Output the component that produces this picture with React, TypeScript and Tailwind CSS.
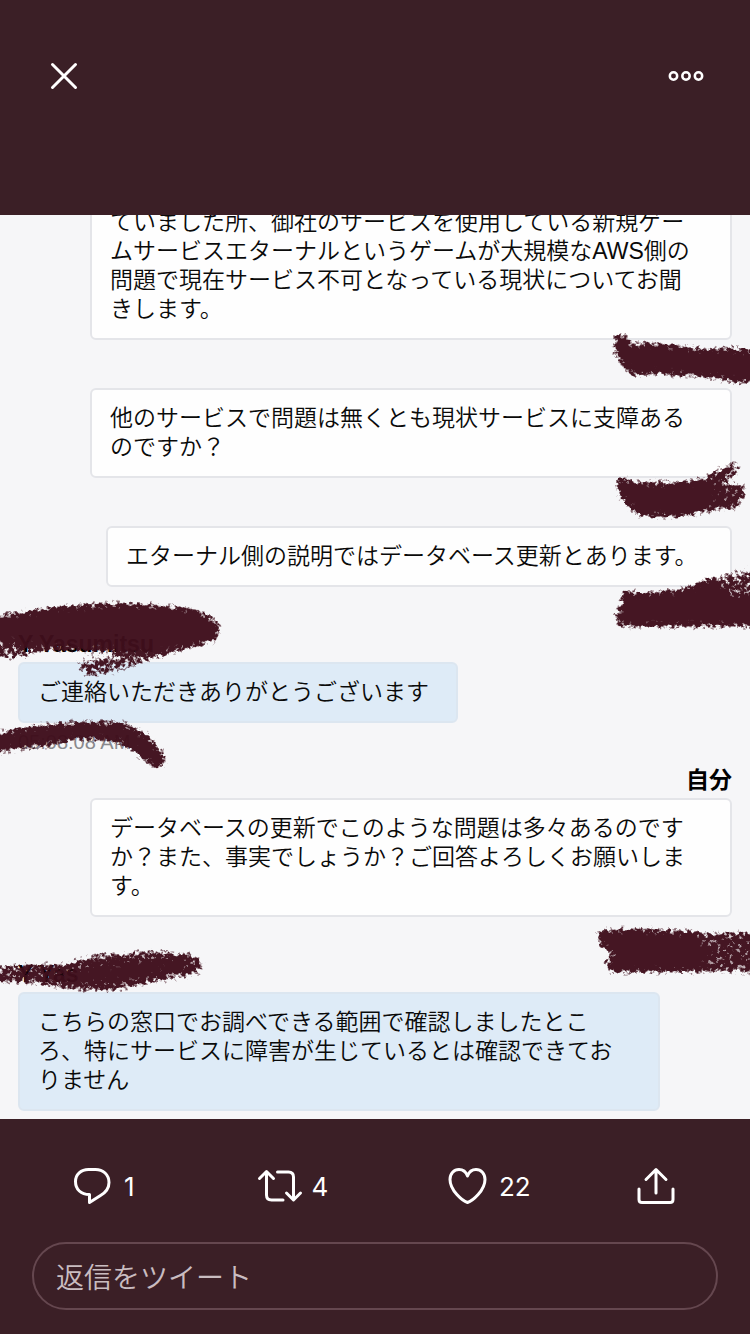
import React from "react";
import clsx from "clsx";

type Message = {
  from: "me" | "agent";
  width: string;
  text: string;
  name?: string;
  time?: string;
};

const messages: Message[] = [
  {
    from: "me",
    width: "w-[642px] -mt-[23px]",
    text: "ていました所、御社のサービスを使用している新規ゲー\nムサービスエターナルというゲームが大規模なAWS側の\n問題で現在サービス不可となっている現状についてお聞\nきします。",
  },
  {
    from: "me",
    width: "w-[642px]",
    text: "他のサービスで問題は無くとも現状サービスに支障ある\nのですか？",
  },
  {
    from: "me",
    width: "w-[626px]",
    text: "エターナル側の説明ではデータベース更新とあります。",
  },
  {
    from: "agent",
    width: "w-[440px]",
    name: "Y Yasumitsu",
    time: "05:08:08 AM",
    text: "ご連絡いただきありがとうございます",
  },
  {
    from: "me",
    width: "w-[642px]",
    name: "自分",
    text: "データベースの更新でこのような問題は多々あるのです\nか？また、事実でしょうか？ご回答よろしくお願いしま\nす。",
  },
  {
    from: "agent",
    width: "w-[642px]",
    name: "Y Yas",
    text: "こちらの窓口でお調べできる範囲で確認しましたとこ\nろ、特にサービスに障害が生じているとは確認できてお\nりません",
  },
];

const Bubble: React.FC<{ message: Message; last: boolean }> = ({ message, last }) => {
  const mine = message.from === "me";
  return (
    <div className={clsx("flex flex-col", mine ? "items-end" : "items-start")}>
      {message.name && (
        <p className="h-[27px] text-[23px] font-bold leading-[18px] text-black">{message.name}</p>
      )}
      <p
        className={clsx(
          "max-w-full whitespace-pre-line rounded-md border-2 px-[18px] py-[14px] text-[23px] font-[350] leading-[29px] text-[#0a0a0a]",
          mine ? "border-[#e4e5e9] bg-[#fefefe]" : "border-[#dce6f0] bg-[#deebf7]",
          message.width
        )}
      >
        {message.text}
      </p>
      {!last && (
        <p className="h-12 pt-[9px] text-xl leading-5 text-[#8a8a8e]">{message.time}</p>
      )}
    </div>
  );
};

// Crayon strokes over the names and times
const Scribbles: React.FC = () => (
  <svg
    className="pointer-events-none absolute inset-0 h-full w-full"
    viewBox="0 0 750 904"
    preserveAspectRatio="none"
    aria-hidden="true"
  >
    <defs>
      <filter
        id="crayon"
        filterUnits="userSpaceOnUse"
        x="-20"
        y="0"
        width="790"
        height="904"
        colorInterpolationFilters="sRGB"
      >
        <feGaussianBlur in="SourceAlpha" stdDeviation="3" result="soft" />
        <feTurbulence type="fractalNoise" baseFrequency="0.24" numOctaves="3" seed="7" />
        <feColorMatrix values="0 0 0 0 0  0 0 0 0 0  0 0 0 0 0  2.2 0 0 0 -0.6" result="grain" />
        <feComposite in="soft" in2="grain" operator="arithmetic" k2="0.85" k3="0.5" />
        <feComponentTransfer result="mask">
          <feFuncA type="linear" slope="4" intercept="-2.4" />
        </feComponentTransfer>
        <feFlood floodColor="#3f0f1c" />
        <feComposite in2="mask" operator="in" />
      </filter>
    </defs>
    <g filter="url(#crayon)" fill="#000" opacity="0.97">
      <path d="M615 119 L626 118 L630 129 L652 127 L680 131 L710 134 L726 132 L770 137 L770 158 L742 169 L715 164 L690 162 L660 159 L632 161 L620 149 L614 137Z" />
      <path d="M615 264 L624 262 L632 267 L675 267 L704 263 L714 270 L720 282 L700 298 L682 302 L641 302 L626 291 L617 276Z" />
      <path d="M700 264 L734 246 L741 257 L722 268 L745 270 L746 284 L735 294 L700 298Z" opacity="0.84" />
      <path d="M620 376 L650 377 L682 374 L712 362 L730 380 L770 384 L770 412 L620 412 L614 399 L622 390Z" />
      <path d="M706 364 L770 348 L770 398 L718 396Z" opacity="0.7" />
      <path d="M-20 402 L20 397 L60 391 L110 388 L150 389 L197 394 L219 407 L219 425 L190 433 L155 440 L110 436 L50 435 L-20 422Z" />
      <path d="M-20 422 L20 424 L55 432 L30 442 L-20 447Z" opacity="0.68" />
      <path d="M78 445 L110 440 L175 426 L180 435 L125 455 L88 464 L78 455Z" opacity="0.68" />
      <path d="M-20 523 L0 517 L30 511 L80 506 L122 507 L147 519 L167 542 L162 553 L152 552 L132 535 L115 527 L78 524 L50 531 L20 534 L-20 541Z" />
      <path d="M597 715 L635 713 L700 717 L708 758 L690 757 L610 758 L604 746 L615 740 L599 730Z" />
      <path d="M690 718 L770 716 L770 760 L735 757 L700 757Z" opacity="0.82" />
      <path d="M-20 754 L35 748 L60 749 L95 739 L125 738 L150 735 L190 738 L204 748 L200 759 L145 770 L110 777 L70 775 L30 769 L-20 767Z" opacity="0.8" />
      <path d="M60 758 L120 748 L185 744 L190 752 L130 766 L80 768Z" />
    </g>
  </svg>
);

const iconClass = "h-12 w-12 shrink-0 fill-none stroke-white stroke-3";

const ReplyIcon = () => (
  <svg className={iconClass} viewBox="0 0 48 48" strokeLinejoin="round">
    <path d="M21.5 32.5V40.5L32.5 33.5C38.5 30 41 25.5 41 20.5C41 12.5 35 7.5 27.5 7.5H20.5C13 7.5 7.5 12.5 7.5 19.5C7.5 27.5 13 32.5 21.5 32.5Z" />
  </svg>
);

const RetweetIcon = () => (
  <svg className={iconClass} viewBox="0 0 48 48" strokeLinecap="round" strokeLinejoin="round">
    <path d="M3.5 16.5L10.5 9.5L17.5 16.5M10.5 10V33C10.5 36.5 12.5 38 15.5 38H27" />
    <path d="M44.5 31L37.5 38L30.5 31M37.5 37.5V15C37.5 11.5 35.5 10 32.5 10H21.5" />
  </svg>
);

const HeartIcon = () => (
  <svg className={iconClass} viewBox="0 0 48 48" strokeLinejoin="round">
    <path d="M24.5 40.5C19.5 39 7 28.5 7 17.5C7 11.5 11 7.5 16 7.5C20 7.5 23 10 24.5 14C26 10 29 7.5 33 7.5C38 7.5 42 11.5 42 17.5C42 28.5 29.5 39 24.5 40.5Z" />
  </svg>
);

const ShareIcon = () => (
  <svg className={iconClass} viewBox="0 0 48 48" strokeLinecap="round" strokeLinejoin="round">
    <path d="M15 17.5L25 7.5L35 17.5M25 8V31" />
    <path d="M8 27V37.5C8 39.5 9 40.5 11 40.5H39C41 40.5 42 39.5 42 37.5V27" />
  </svg>
);

const actions = [
  { label: "返信", icon: <ReplyIcon />, count: "1" },
  { label: "リツイート", icon: <RetweetIcon />, count: "4" },
  { label: "いいね", icon: <HeartIcon />, count: "22" },
  { label: "共有", icon: <ShareIcon />, count: "" },
];

const App: React.FC = () => {
  return (
    <div className="flex min-h-screen flex-col bg-[#3b1f26] font-['Liberation_Sans','Noto_Sans_CJK_JP',sans-serif]">
      <header className="flex justify-between px-10 pt-[52px] pb-[115px]">
        <button type="button" aria-label="閉じる">
          <svg className={iconClass} viewBox="0 0 48 48" strokeLinecap="round">
            <path d="M12.5 12.5L35.5 35.5M35.5 12.5L12.5 35.5" />
          </svg>
        </button>
        <button type="button" aria-label="その他">
          <svg className="h-12 w-12 fill-none stroke-white stroke-[2.5]" viewBox="0 0 48 48">
            <circle cx="11.5" cy="24" r="3.7" />
            <circle cx="24" cy="24" r="3.7" />
            <circle cx="36.5" cy="24" r="3.7" />
          </svg>
        </button>
      </header>

      <main className="relative overflow-hidden bg-[#f6f6f8] px-[18px] pb-2">
        {messages.map((message, index) => (
          <Bubble key={index} message={message} last={index === messages.length - 1} />
        ))}
        <Scribbles />
      </main>

      <footer className="pt-[43px] pb-6">
        <div className="grid grid-cols-4">
          {actions.map((action) => (
            <button
              key={action.label}
              type="button"
              aria-label={action.label}
              className="flex items-center gap-2 pl-[68px] font-[Inter] text-[26px] text-white"
            >
              {action.icon}
              {action.count && <span>{action.count}</span>}
            </button>
          ))}
        </div>
        <div className="mt-8 px-8">
          <input
            type="text"
            aria-label="返信をツイート"
            placeholder="返信をツイート"
            className="h-[68px] w-full rounded-full border-2 border-[#65474f] bg-transparent px-[22px] font-['Noto_Sans_CJK_JP',sans-serif] text-[28px] font-[350] text-white outline-none placeholder:text-[#c9bcc0]"
          />
        </div>
      </footer>
    </div>
  );
};

export default App;
